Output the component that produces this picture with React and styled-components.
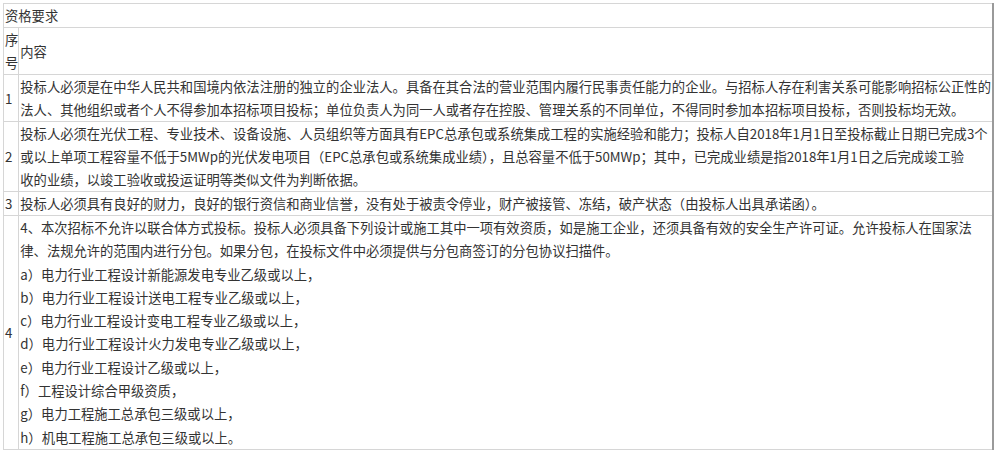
import * as React from 'react';
import styled, { createGlobalStyle } from 'styled-components';

const GlobalStyle = createGlobalStyle`
    html, body {
        margin: 0;
        padding: 0;
        background: #ffffff;
    }
    body {
        font-family: "Noto Sans CJK SC", "Noto Sans", sans-serif;
        color: #333333;
    }
`;

const Page = styled.div`
    padding: 3px 8px 0 3px;
`;

const Table = styled.table`
    width: 989px;
    border-collapse: collapse;
    border: 1px solid #9a9a9a;
    border-right-width: 2px;
    font-size: 13.3px;
    line-height: 23px;
`;

const Cell = styled.td`
    border: 1px solid #d6d6d6;
    padding: 0 1px;
    vertical-align: middle;
    text-align: left;
    white-space: nowrap;
`;

const NumCell = styled(Cell)`
    width: 12px;
    padding: 0 0 0 1px;
    white-space: normal;
    word-break: break-all;
`;

const Line = styled.div`
    white-space: nowrap;
    line-height: ${({ $tall }) => $tall ? '23.3px' : '23px'};
`;

const rows = [
    {
        no: '1',
        lines: [
            '投标人必须是在中华人民共和国境内依法注册的独立的企业法人。具备在其合法的营业范围内履行民事责任能力的企业。与招标人存在利害关系可能影响招标公正性的',
            '法人、其他组织或者个人不得参加本招标项目投标；单位负责人为同一人或者存在控股、管理关系的不同单位，不得同时参加本招标项目投标，否则投标均无效。',
        ],
    },
    {
        no: '2',
        lines: [
            '投标人必须在光伏工程、专业技术、设备设施、人员组织等方面具有EPC总承包或系统集成工程的实施经验和能力；投标人自2018年1月1日至投标截止日期已完成3个',
            '或以上单项工程容量不低于5MWp的光伏发电项目（EPC总承包或系统集成业绩），且总容量不低于50MWp；其中，已完成业绩是指2018年1月1日之后完成竣工验',
            '收的业绩，以竣工验收或投运证明等类似文件为判断依据。',
        ],
    },
    {
        no: '3',
        lines: [
            '投标人必须具有良好的财力，良好的银行资信和商业信誉，没有处于被责令停业，财产被接管、冻结，破产状态（由投标人出具承诺函）。',
        ],
    },
    {
        no: '4',
        tall: true,
        lines: [
            '4、本次招标不允许以联合体方式投标。投标人必须具备下列设计或施工其中一项有效资质，如是施工企业，还须具备有效的安全生产许可证。允许投标人在国家法',
            '律、法规允许的范围内进行分包。如果分包，在投标文件中必须提供与分包商签订的分包协议扫描件。',
            'a）电力行业工程设计新能源发电专业乙级或以上，',
            'b）电力行业工程设计送电工程专业乙级或以上，',
            'c）电力行业工程设计变电工程专业乙级或以上，',
            'd）电力行业工程设计火力发电专业乙级或以上，',
            'e）电力行业工程设计乙级或以上，',
            'f）工程设计综合甲级资质，',
            'g）电力工程施工总承包三级或以上，',
            'h）机电工程施工总承包三级或以上。',
        ],
    },
];

const App = () => {
    return <>
        <GlobalStyle />
        <Page>
            <Table>
                <tbody>
                    <tr>
                        <Cell colSpan={2}>资格要求</Cell>
                    </tr>
                    <tr>
                        <NumCell>序号</NumCell>
                        <Cell>内容</Cell>
                    </tr>
                    {rows.map(row => <tr key={row.no}>
                        <NumCell>{row.no}</NumCell>
                        <Cell>
                            {row.lines.map((line, i) => <Line key={i} $tall={row.tall}>{line}</Line>)}
                        </Cell>
                    </tr>)}
                </tbody>
            </Table>
        </Page>
    </>;
};

export default App;
